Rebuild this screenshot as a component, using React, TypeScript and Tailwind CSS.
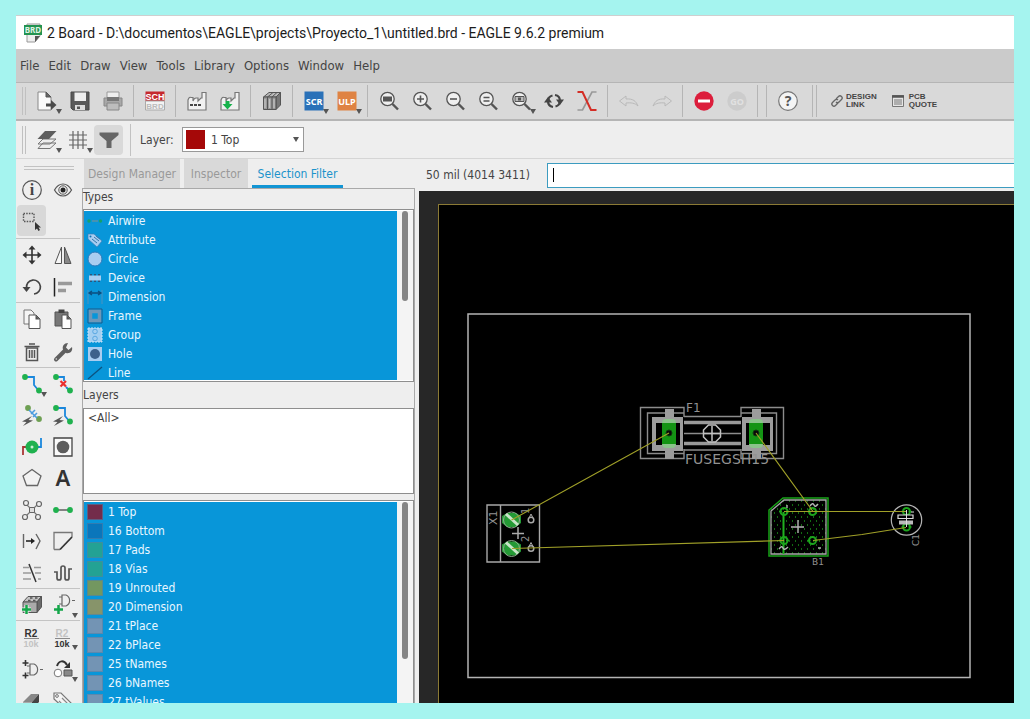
import React from "react";

type IconDef = { label: string; art: React.ReactNode; menu?: boolean; active?: boolean };

const G = "#555";
const K = "#333";
const GREEN = "#1fb14e";
const BLUE = "#1a87dc";
const BOLD = "font-['Noto_Sans',sans-serif] font-bold";
const ARIAL_BOLD = "font-['Liberation_Sans',sans-serif] font-bold";

function Icon({ children }: { children: React.ReactNode }) {
  return (
    <svg width="30" height="30" viewBox="-15 -15 30 30" fill="none" className="shrink-0 overflow-visible" aria-hidden="true">
      {children}
    </svg>
  );
}

const Caret = () => <path d="M9 8h6l-3 5z" fill={G} />;

const lens = (
  <>
    <path d="M3.500 3 9 8.500" stroke={G} strokeWidth="2.400" />
    <circle cx="-1.500" cy="-2" r="6.700" fill="#efefef" stroke={G} strokeWidth="1.300" />
  </>
);

const factory = <path d="M-9 9V-1c1-3 2-3 3-2.500l2 0V0c1-3 2-3 3-3l2 0v3l3-3h1V-8.500h4V9z" fill="#f1f1f1" stroke="#777" strokeWidth="1.200" />;

const books = (
  <>
    <path d="M-8.500-4-3-8.500H8.500L4-4z" fill="#bbb" stroke={G} />
    <path d="M4-4 8.500-8.500V4L4 8.500z" fill="#777" stroke={G} />
    <path d="M-8.500-4H4V8.500H-8.500z" fill="#999" stroke={G} />
    <path d="M-4.500-4V8.500M0-4V8.500M-4.500-4 1-8.500M0-4 5-8.500" stroke="#555" />
    <path d="M-7-2V7M-2.300-2V7M2-2V7" stroke="#ccc" />
  </>
);

const brick = (
  <>
    <path d="M-9-3-4-8.500H9.500L5-3z" fill="#c4c4c4" stroke={G} />
    <path d="M5-3 9.500-8.500V2L5 7.500z" fill="#6a6a6a" stroke={G} />
    <path d="M-9-3H5V7.500H-9z" fill="#aaa" stroke={G} />
    <path d="M-4-4.500h2.500M1-4.500h2.500M-2-7h2.500M3-7h2.500" stroke="#555" strokeWidth="1.600" />
  </>
);

const toolbar: IconDef[][] = [
  [
    { label: "Open", menu: true, art: <><path d="M-9-9h8l5 5V9H-9z" fill="#fafafa" stroke="#888" /><path d="M-1-9v5h5z" fill="#666" stroke={G} /><path d="M-1 2.500H4V-1l5.500 5L4 9V5.500H-1z" fill="#4a4a4a" /></> },
    { label: "Save", art: <><path d="M-9-9H9V9H-7L-9 7z" fill="#5a5a5a" stroke="#484848" /><path d="M-5.500-8.500H6V0H-5.500z" fill="#eee" /><path d="M-5 4H5V9H-5z" fill="#ddd" /><path d="M-3 5.500H0V8H-3z" fill={G} /></> },
    { label: "Print", art: <><path d="M-6-9H6V-2H-6z" fill="#eee" stroke="#999" /><path d="M-9-3H9V5H-9z" fill="#a8a8a8" stroke="#888" /><path d="M-6-4H6V0H-6z" fill="#777" /><path d="M-6 2H6V9H-6z" fill="#bdbdbd" stroke="#888" /></> },
  ],
  [
    { label: "Schematic", art: <><path d="M-9.500-9.500h19V0h-19z" fill="#c5282d" /><path d="M-9.500 0h19v9h-19z" fill="#f3f3f3" stroke="#aaa" /><text x="0" y="-1.500" fontSize="9" textAnchor="middle" fill="#fff" className={ARIAL_BOLD}>SCH</text><text x="0" y="8" fontSize="8" textAnchor="middle" fill="#bbb" className={ARIAL_BOLD}>BRD</text></> },
  ],
  [
    { label: "CAM processor", art: <>{factory}<path d="M-7 4h11" stroke="#444" strokeWidth="1.800" strokeDasharray="3 1" /></> },
    { label: "Manufacturing", art: <>{factory}<path d="M-4.500 0h4v3h3l-5 5.500-5-5.500h3z" fill="#16b24b" /></> },
  ],
  [{ label: "Library", art: books }],
  [
    { label: "Run script", menu: true, art: <><path d="M-9.500-9.500H9.500V9.500H-9.500z" fill="#2a71b8" /><text y="3.500" fontSize="9" textAnchor="middle" fill="#fff" className={BOLD}>SCR</text></> },
    { label: "Run ULP", menu: true, art: <><path d="M-9.500-9.500H9.500V9.500H-9.500z" fill="#df8343" /><text y="3.500" fontSize="9" textAnchor="middle" fill="#fff" className={BOLD}>ULP</text></> },
  ],
  [
    { label: "Zoom to fit", art: <>{lens}<path d="M-6-4.500H3V.500H-6z" fill={G} /></> },
    { label: "Zoom in", art: <>{lens}<path d="M-5-2H2M-1.500-5.500v7" stroke={G} strokeWidth="1.600" /></> },
    { label: "Zoom out", art: <>{lens}<path d="M-5-2H2" stroke={G} strokeWidth="1.600" /></> },
    { label: "Redraw", art: <>{lens}<path d="M-4.500-3.500h6M-4.500 0h6" stroke={G} strokeWidth="1.400" /></> },
    { label: "Zoom select", menu: true, art: <>{lens}<path d="M-6-4.500H3V.500H-6z" fill="#bbb" stroke={G} /><path d="M-3-3.500h3v3h-3z" fill={G} /></> },
    { label: "Refresh", art: <><path d="M-1.500-5.500A6 6 0 0 0-6 0c0 3 2 5.500 5 6" stroke="#444" strokeWidth="2.200" /><path d="M1.500 5.500A6 6 0 0 0 6 0c0-3-2-5.500-5-6" stroke="#444" strokeWidth="2.200" /><path d="M-10 1.500-6-4l4 5.500zM10-1.500 6 4 2-1.500z" fill="#444" /></> },
    { label: "Routing", art: <><path d="M-9.500 9h5L5-9h4.500" stroke="#999" strokeWidth="1.700" /><path d="M-9.500-9h5L4 9h5.500" stroke="#d42d25" strokeWidth="2" /></> },
  ],
  [
    { label: "Undo", art: <path d="M-9.500 0-3-5v3c7-.500 10 2 12 7-3-3-7-3.500-12-3v3z" stroke="#b9b9b9" /> },
    { label: "Redo", art: <path d="M9.500 0 3-5v3c-7-.500-10 2-12 7 3-3 7-3.500 12-3v3z" stroke="#b9b9b9" /> },
  ],
  [
    { label: "Stop", art: <><circle r="9.700" fill="#dc1e3c" /><path d="M-6 0H6" stroke="#fff" strokeWidth="3" /></> },
    { label: "Go", art: <><circle r="9.700" fill="#ccc" /><text y="3.500" fontSize="9" textAnchor="middle" fill="#e1e1e1" className={BOLD}>GO</text></> },
  ],
];

const helpArt = <><circle r="9.300" fill="#f4f4f4" stroke="#777" strokeWidth="1.200" /><text y="5" fontSize="14" textAnchor="middle" fill="#555" className={BOLD}>?</text></>;

const dot = (x: number, y: number, c = GREEN) => <circle cx={x} cy={y} r="2.900" fill={c} />;
const bolt = <path d="M0 1-10 6.500l4.500.5L-9 11 1 5.500-3.500 5z" fill="#555" />;
const gate = <path d="M-3-6H1a6 6 0 0 1 0 11H-3zM7-.500h3M-6-4h3M-6 3h3" stroke="#666" strokeWidth="1.200" />;

const palette: IconDef[][] = [
  [
    { label: "Info", art: <><circle r="9.300" stroke={G} strokeWidth="1.200" /><text y="5" fontSize="16" textAnchor="middle" fill="#444" className="font-['Liberation_Serif',serif] font-bold">i</text></> },
    { label: "Show", art: <><path d="M-8.500 0C-4-8 4-8 8.500 0 4 8-4 8-8.500 0z" stroke={G} strokeWidth="1.200" /><circle r="4.200" stroke={G} /><circle r="2.500" fill="#222" /></> },
    { label: "Group", active: true, art: <><path d="M-8.500-7.500H2V.500H-8.500z" stroke={G} strokeWidth="1.400" strokeDasharray="1.500 1.200" /><path d="M3 1v8l2-1.500L6.500 10l1.500-1-1.500-2.500H9z" fill={K} /></> },
  ],
  [
    { label: "Move", art: <><path d="M-7 0H7M0-7V7" stroke={K} strokeWidth="1.600" /><path d="M-9.500 0l4-3.500v7zM9.500 0l-4-3.500v7zM0-9.500l3.500 4h-7zM0 9.500l3.500-4h-7z" fill={K} /></> },
    { label: "Mirror", art: <><path d="M-1.500-8V8.500H-8z" fill="#f6f6f6" stroke={G} /><path d="M1.500-8V8.500H8z" fill="#888" stroke={G} /></> },
    { label: "Rotate", art: <><path d="M-5.500 1A7 7 0 1 1 2 7" stroke="#444" strokeWidth="1.700" /><path d="M-9.500 0h8L-5.500 5z" fill="#444" /></> },
    { label: "Align", art: <><path d="M-8.500-9V9.500" stroke="#222" strokeWidth="1.500" /><path d="M-5-3.500H9M-5 3.500H3" stroke="#999" strokeWidth="3.500" /></> },
  ],
  [
    { label: "Copy", art: <><path d="M-8-9h7l3 3V5H-8z" fill="#f5f5f5" stroke="#777" /><path d="M-3-4H4l4 4V9.500H-3z" fill="#fff" stroke={G} /><path d="M3.500-4v4.500H8z" fill={G} /></> },
    { label: "Paste", art: <><path d="M-8-7H5V7H-8z" fill="#777" stroke="#555" /><path d="M-4.500-9.500h6V-6h-6z" fill="#444" /><path d="M-1-4H4l4 4V9.500H-1z" fill="#fff" stroke={G} /><path d="M3.500-4v4.500H8z" fill={G} /></> },
    { label: "Delete", art: <><path d="M-5.500-4V8.500h11V-4z" fill="#eee" stroke={G} strokeWidth="1.500" /><path d="M-7.500-5.500h15M-3-8h6M-2.500-2V6M0-2V6M2.500-2V6" stroke={G} strokeWidth="1.500" /></> },
    { label: "Change", art: <><path d="M-7 7.500 2-1.500" stroke="#5f5f5f" strokeWidth="4" strokeLinecap="round" /><path d="M5-9C1-9-1-6 0-2.500L3 1c4 1 7-2 6-6L5.500-2 3-4.500z" fill="#5f5f5f" /><circle cx="-6.700" cy="7" r=".8" fill="#ddd" /></> },
  ],
  [
    { label: "Route", menu: true, art: <><path d="M-7-7H2V1L7 7" stroke={BLUE} strokeWidth="1.800" />{dot(-7, -7)}{dot(7, 6.5)}</> },
    { label: "Ripup", art: <><path d="M-7-7H1V-3M3 3 7 7" stroke={BLUE} strokeWidth="1.800" />{dot(-7, -7)}{dot(7, 6.5)}<path d="M-2.500-3 3 2.500M3-3-2.500 2.500" stroke="#ea2f2f" strokeWidth="2.200" /></> },
    { label: "Autoroute", art: <>{dot(-4, -7, "#6ea053")}{dot(7, 4, "#6ea053")}<path d="m-3-5 8 8M-1-1 3-5M1 2 5-2" stroke="#4b9cdf" strokeWidth="1.600" />{bolt}</> },
    { label: "Quick route", art: <><path d="M-7-7H2V1L7 7" stroke={BLUE} strokeWidth="1.800" />{dot(-7, -7)}{dot(7, 6.5)}{bolt}</> },
    { label: "Via", art: <><path d="M-9 8V0h5" stroke="#a93636" strokeWidth="1.800" /><path d="M9-9V0H4" stroke={BLUE} strokeWidth="1.800" /><circle r="6.500" fill={GREEN} /><circle r="1.500" fill="#c9f1d4" /></> },
    { label: "Hole", art: <><path d="M-9-9H9V9H-9z" fill="#fafafa" stroke="#444" strokeWidth="1.300" /><circle r="6.300" fill="#5d5d5d" /></> },
    { label: "Polygon", art: <path d="M0-8.500 9-2 5.500 7.500h-11L-9-2z" fill="#f2f2f2" stroke="#666" strokeWidth="1.300" /> },
    { label: "Text", art: <text y="8" fontSize="22" textAnchor="middle" fill="#333" className="font-['Noto_Sans',sans-serif] font-semibold">A</text> },
    { label: "Ratsnest", art: <><path d="m-6-6 12 12M6-6-6 6" stroke="#777" strokeWidth="1.200" /><path d="M-2.500-2.500h5v5h-5z" fill="#ddd" stroke="#666" />{[[-6, -7], [7, -6], [-7, 7], [6, 7]].map(([x, y]) => <circle key={`${x}${y}`} cx={x} cy={y} r="2.500" fill="#eee" stroke="#666" strokeWidth="1.200" />)}</> },
    { label: "Signal", art: <><path d="M-7 0H7" stroke="#777" strokeWidth="1.800" />{dot(-7, 0)}{dot(7, 0)}</> },
    { label: "Split", art: <><path d="M-8.500-7V7M4-7 8 0 4 8" stroke="#666" strokeWidth="1.400" /><path d="M-6 0H0" stroke="#222" strokeWidth="1.600" /><path d="M-1-3 3 0-1 3z" fill="#222" /></> },
    { label: "Miter", art: <><path d="M-9 8.500V-8.500H9V-4M-9 8.500h6" stroke="#777" strokeWidth="1.300" /><path d="M-3 8.500 9-4" stroke="#333" strokeWidth="1.800" /></> },
    { label: "Slice", art: <><path d="M-9-5.500h6M2-5.500h7M-9 0h8M3 0h6M-9 6h8M6 6h3" stroke="#999" strokeWidth="1.400" /><path d="M-3-9 4 9" stroke="#333" strokeWidth="1.500" /></> },
    { label: "Meander", art: <path d="M-9-1h3V5a1.800 1.800 0 0 0 4 0V-5a1.800 1.800 0 0 1 4 0V5a1.800 1.800 0 0 0 4 0V-4h3" stroke={G} strokeWidth="1.700" /> },
  ],
  [
    { label: "Add part", art: <>{brick}<path d="M-10 4.500h9M-5.500 0v9" stroke="#eee" strokeWidth="4" /><path d="M-10 4.500h9M-5.500 0v9" stroke="#14a64a" strokeWidth="2.500" /></> },
    { label: "Add gate", menu: true, art: <><g transform="translate(2 -4)">{gate}</g><path d="M-9 4.500h9M-4.500 0v9" stroke="#14a64a" strokeWidth="2.500" /></> },
  ],
  [
    { label: "Name", art: <><text x="-1" y="0" fontSize="10" textAnchor="middle" fill="#333" className={ARIAL_BOLD}>R2</text><path d="M-8 1.500H7" stroke="#888" /><text x="-1" y="10" fontSize="9" textAnchor="middle" fill="#c3c3c3" className={ARIAL_BOLD}>10k</text></> },
    { label: "Value", menu: true, art: <><text x="-1" y="0" fontSize="10" textAnchor="middle" fill="#c3c3c3" className={ARIAL_BOLD}>R2</text><path d="M-8 1.500H7" stroke="#888" /><text x="-1" y="10" fontSize="9" textAnchor="middle" fill="#333" className={ARIAL_BOLD}>10k</text></> },
    { label: "Gate swap", art: <><g transform="translate(1 1)">{gate}</g><path d="M-9.500-6h6M-6.500-9v6M-9.500 6.500h6M-6.500 3.500v6" stroke={K} strokeWidth="1.600" /></> },
    { label: "Replace", menu: true, art: <><path d="M-6-3C-4-9 1-9 4-4" stroke={K} strokeWidth="2" /><path d="M7-7v6H1z" fill={K} /><circle cx="-5" cy="4" r="3.800" fill="#fff" stroke="#777" /><path d="M1 1h8v6H1z" fill="#888" stroke={G} /></> },
    { label: "Lock", art: <><path d="M-9 1-1-7h8L0 1z" fill="#888" /><path d="M0 1 7-7v8L0 8z" fill="#444" /><path d="M-9 1h9v8h-9z" fill="#aaa" /></> },
    { label: "Attribute", art: <><path d="M-9-8h7L9 3 3 9-9-2z" fill="#f4f4f4" stroke="#777" strokeWidth="1.200" /><circle cx="-6" cy="-5" r="1.400" stroke="#777" /><path d="m-1-3 6 6M-4 0l6 6" stroke="#888" strokeWidth="1.200" /></> },
  ],
];

const groupHeights = ["h-16", "h-16", "h-[65px]", "h-[221px]", "h-8", "h-24"];

const typeItems: { name: string; art: React.ReactNode }[] = [
  { name: "Airwire", art: <><path d="M5 8h6" stroke="#5d91a3" strokeWidth="1.500" /><circle cx="2" cy="8" r="1.700" fill="#16a06b" /><circle cx="13.500" cy="8" r="1.700" fill="#16a06b" /></> },
  { name: "Attribute", art: <><path d="M1 2h6l8 7-5 6L1 7z" fill="#a9cdf0" stroke="#3880b9" strokeWidth=".7" /><circle cx="3.500" cy="4.500" r="1" fill="#0a70b4" /><path d="m7 5 5 4M5 7l5 4M9 4l4 3" stroke="#3576ab" /></> },
  { name: "Circle", art: <circle cx="8" cy="8" r="7" fill="#a9cdf0" stroke="#2b79ba" /> },
  { name: "Device", art: <><path d="M4 4v8M8 4v8M12 4v8" stroke="#2a567c" strokeWidth="2" /><path d="M2 5.500h12v5H2z" fill="#a9cdf0" /></> },
  { name: "Dimension", art: <><path d="M1 1v14M15 1v14" stroke="#4f91bd" /><path d="M2 4h12M5 2 2 4l3 2M11 2l3 2-3 2" stroke="#0b4e7f" strokeWidth="1.300" /></> },
  { name: "Frame", art: <><path d="M1 1h14v14H1z" stroke="#1d5887" /><path d="M3.500 3.500h9v9h-9z" stroke="#6e97b8" strokeWidth="3.500" /></> },
  { name: "Group", art: <><path d="M1 1h14v14H1z" fill="#a3cff2" stroke="#cbe4f7" strokeDasharray="2 1" /><circle cx="8" cy="4.500" r="2.300" stroke="#5ba8e2" /><circle cx="8" cy="11.500" r="2.300" stroke="#5ba8e2" /></> },
  { name: "Hole", art: <><path d="M1 1h14v14H1z" fill="#a9cdf0" /><circle cx="8" cy="8" r="5" fill="#3d618b" /></> },
  { name: "Line", art: <path d="M1 14 15 2" stroke="#0c527f" strokeWidth="1.300" /> },
];

const layerItems: [string, string][] = [
  ["1 Top", "bg-[#732c4b]"],
  ["16 Bottom", "bg-[#0a76bb]"],
  ["17 Pads", "bg-[#23a294]"],
  ["18 Vias", "bg-[#23a294]"],
  ["19 Unrouted", "bg-[#739760]"],
  ["20 Dimension", "bg-[#87946a]"],
  ["21 tPlace", "bg-[#7394b4]"],
  ["22 bPlace", "bg-[#7394b4]"],
  ["25 tNames", "bg-[#7394b4]"],
  ["26 bNames", "bg-[#7394b4]"],
  ["27 tValues", "bg-[#7394b4]"],
];

const Sep = () => <span className="mx-1 h-8 w-px shrink-0 bg-[#b5b5b5]" />;
const Grip = () => <span className="ml-1.5 h-7 w-1 shrink-0 border-x border-[#c0c0c0]" />;

function ToolButton({ item, className }: { item: IconDef; className: string }) {
  return (
    <button type="button" aria-label={item.label} className={`flex shrink-0 items-center justify-center ${className}`}>
      <Icon>
        {item.art}
        {item.menu && <Caret />}
      </Icon>
    </button>
  );
}

function ToolPalette() {
  return (
    <aside aria-label="Drawing tools" className="flex w-[66px] shrink-0 flex-col overflow-hidden">
      <div className="mx-2 mt-[7px] h-1 shrink-0 border-y border-[#c2c2c2]" />
      <div className="mt-1 flex flex-col">
        {palette.map((group, i) => (
          <div
            key={i}
            className={`mr-0.5 grid shrink-0 grid-cols-[31px_31px] ${i ? "content-between border-t border-[#c4c4c4]" : "content-start"} ${groupHeights[i]}`}
          >
            {group.map((item) => (
              <ToolButton key={item.label} item={item} className={`h-[31px] ${item.active ? "mx-px rounded-sm bg-[#d8d8d8]" : ""}`} />
            ))}
          </div>
        ))}
      </div>
    </aside>
  );
}

function Scrollbar({ size }: { size: string }) {
  return (
    <div className="flex w-4 shrink-0 justify-center bg-[#f4f4f4]">
      <span className={`w-[6px] rounded-full bg-[#858585] ${size}`} />
    </div>
  );
}

function SelectionPanel() {
  return (
    <section className="flex w-[333px] shrink-0 flex-col">
      <div role="tablist" className="flex h-[29px] shrink-0 gap-1 pl-0.5 text-[#999]">
        <button role="tab" type="button" className="w-24 bg-[#d9d9d9]">Design Manager</button>
        <button role="tab" type="button" className="w-16 bg-[#d9d9d9]">Inspector</button>
        <button role="tab" type="button" aria-selected="true" className="w-[91px] border-b-[3px] border-[#1295d4] pt-[3px] text-[#1c93cb]">Selection Filter</button>
      </div>
      <div className="flex min-h-0 flex-1 flex-col border border-b-0 border-[#a9a9a9]">
        <h2 className="h-5 shrink-0 leading-4">Types</h2>
        <div className="flex h-[173px] shrink-0 overflow-hidden border border-[#8e8e8e] bg-white py-px">
          <ul className="flex-1 bg-[#0896d9] text-[#e8f6ff]">
            {typeItems.map((t) => (
              <li key={t.name} className="flex h-[19px] items-center gap-[5px] pl-[3px]">
                <svg width="16" height="16" viewBox="0 0 16 16" fill="none" aria-hidden="true">{t.art}</svg>
                {t.name}
              </li>
            ))}
          </ul>
          <Scrollbar size="h-[90px]" />
        </div>
        <h2 className="h-[26px] shrink-0 leading-[26px]">Layers</h2>
        <div className="h-[86px] shrink-0 border border-[#8e8e8e] bg-white px-1 leading-[18px]">&lt;All&gt;</div>
        <div className="mt-1.5 flex min-h-0 flex-1 overflow-hidden border border-b-0 border-[#8e8e8e] bg-white pt-px">
          <ul className="flex-1 bg-[#0896d9] text-[#e8f6ff]">
            {layerItems.map(([name, color]) => (
              <li key={name} className="flex h-[19px] items-center gap-[5px] pl-[3px]">
                <span className={`size-4 border border-[#4c80a8]/60 ${color}`} />
                {name}
              </li>
            ))}
          </ul>
          <Scrollbar size="h-[157px]" />
        </div>
      </div>
    </section>
  );
}

const pad = (x: number, y: number) => (
  <g key={`${x}-${y}`}>
    <circle cx={x} cy={y} r="3.500" stroke="#1ca51c" strokeWidth="2" />
    <path d={`M${x - 5} ${y}h3M${x + 2} ${y}h3`} stroke="#1ca51c" strokeWidth="1.500" />
  </g>
);

function BoardDrawing() {
  const label = "font-['DejaVu_Sans',sans-serif]";
  return (
    <svg className="block h-full w-full" fill="none" role="img" aria-label="Board layout">
      <defs>
        <pattern id="dots" x="0" y="0" width="6" height="8" patternUnits="userSpaceOnUse">
          <rect width="1" height="2" fill="#126b12" />
          <rect x="3" y="4" width="1" height="2" fill="#126b12" />
        </pattern>
      </defs>
      <g transform="translate(-439 -205)">
        <path d="M468 314H970V677.500H468z" stroke="#b4b4b4" strokeWidth="1.500" />

        <g stroke="#8c8c8c" strokeWidth="1.400">
          <path d="M684 417v-9.500H640.500v51H684V449M741 417v-9.500h42.500v51H741V449" />
          <path d="M684 413H647.500V453.500H684M741 413H776.500V453.500H741" />
          <path d="M684 416.500h57M684 450h57M684 433.500h57" />
        </g>
        <path d="M684 422.500h57M684 443.500h57" stroke="#999" strokeWidth="3.500" />
        <g fill="#9c9c9c">
          {[652, 742].map((x) => (
            <path key={x} fillRule="evenodd" d={`M${x} 417h31v34h-31zM${x + 4} 423v22h24v-22z`} />
          ))}
          <path d="M665 409h9v9h-9zM665 450h9v9h-9zM752 409h9v9h-9zM752 450h9v9h-9z" />
        </g>
        {[669, 756].map((x) => (
          <g key={x}>
            <rect x={x - 7} y="419" width="14" height="29" rx="4" fill="#8ac38a" />
            <rect x={x - 7} y="423" width="14" height="21" fill="#149414" />
            <circle cx={x} cy="433" r="3" fill="#0a0a0a" stroke="#103d10" />
          </g>
        ))}
        <path d="m708.500 425 7 0 5 5v7l-5 5h-7l-5-5v-7zM712 426v15M704 433.500h16" stroke="#c0c0c0" strokeWidth="1.500" />
        <text x="686" y="412" fontSize="12" fill="#929292" className={label}>F1</text>
        <text x="685" y="464" fontSize="14" fill="#929292" className={label}>FUSEGSH15</text>

        <path d="M487 505h52.500v57H487zM500.500 505v57" stroke="#a8a8a8" strokeWidth="1.400" />
        <g transform="translate(497 525) rotate(-90)">
          <text fontSize="11" fill="#929292" className={label}>X1</text>
        </g>
        {[520, 548.5].map((y) => (
          <g key={y}>
            <path d={`M502 ${y - 4}l5-3h9l5 3v7l-5 4h-9l-5-4z`} fill="#249a35" />
            <circle cx="511.500" cy={y} r="8" stroke="#8fab8f" />
            <path d={`M506 ${y - 6}l12 11`} stroke="#c7e4c7" strokeWidth="3" />
            <circle cx="531" cy={y} r="2.800" stroke="#a8a8a8" strokeWidth="1.500" />
            <path d={`M529 ${y - 2}l2-4 2 4`} stroke="#a8a8a8" />
          </g>
        ))}
        <path d="M518 527v12M512 533.500h12" stroke="#aaa" strokeWidth="1.500" />
        <g transform="translate(529 542) rotate(-90)">
          <text fontSize="10" fill="#929292" className={label}>2</text>
        </g>
        <g transform="translate(529 514) rotate(-90)">
          <text fontSize="10" fill="#929292" className={label}>1</text>
        </g>

        <path d="M783 498h45v58h-59v-46z" stroke="#18a118" strokeWidth="1.500" fill="url(#dots)" />
        <path d="M784 500h42v54h-55v-43z" stroke="#aaa" strokeWidth="1.300" />
        <path d="M783.500 512v42" stroke="#20b020" strokeWidth="2" />
        {pad(784, 511.5)}{pad(812.5, 511.5)}{pad(784, 540.5)}{pad(812.5, 540.5)}
        <path d="M798 520v13M791 527h13M787 505v3M810 506q3-4 4-1t4-1M779 549q3-4 4-1t5-1M818 548h3" stroke="#b4b4b4" strokeWidth="1.400" />
        <text x="812" y="565" fontSize="9" fill="#929292" className={label}>B1</text>

        <circle cx="906.500" cy="520" r="15.200" stroke="#b4b4b4" strokeWidth="1.200" />
        {pad(906.5, 511.5)}{pad(906.5, 527)}
        <path d="M898 515h15v3.500h-15z" fill="#000" stroke="#ddd" strokeWidth="1.200" />
        <path d="M899 520.500h14v4h-14z" fill="#bbb" />
        <path d="M906.500 510v17M911 512h3" stroke="#ddd" />
        <g transform="translate(919 546) rotate(-90)">
          <text fontSize="9" fill="#929292" className={label}>C1</text>
        </g>

        <path d="M511.500 520 669 433M756 433l57 78.500M784 511.500h122M512 548.500l272-8M813 540.500l49-6 44-7" stroke="#a0a028" strokeWidth="1.100" />
      </g>
    </svg>
  );
}

export default function App() {
  return (
    <div className="h-screen min-h-[480px] bg-[#a5f4ef] px-4 pt-[15px] pb-4 font-['DejaVu_Sans_Condensed','Noto_Sans',sans-serif] text-[12px] leading-4 text-[#444]">
      <div className="flex h-full flex-col overflow-hidden border-t border-[#cfcfcf] bg-[#eee]">
        <header className="flex h-[33px] shrink-0 items-center gap-[5px] bg-white pl-2">
          <svg width="18" height="20" viewBox="0 0 18 20" fill="none" aria-hidden="true">
            <path d="M3 1h13v12l-5 6H3z" fill="#eee" stroke="#999" />
            <path d="M16 13h-5v6z" fill="#555" />
            <path d="M0 2h18v10H0z" fill="#239350" />
            <text x="9" y="10" fontSize="8" textAnchor="middle" fill="#e0f3e6" className={BOLD}>BRD</text>
          </svg>
          <h1 className="font-['Roboto',sans-serif] text-[14px] text-[#1c1c1c]">2 Board - D:\documentos\EAGLE\projects\Proyecto_1\untitled.brd - EAGLE 9.6.2 premium</h1>
        </header>

        <nav className="flex h-[34px] shrink-0 items-center gap-[9px] border-b border-[#b5b5b5] bg-[#cbcbcb] pl-1 text-[13px]">
          {["File", "Edit", "Draw", "View", "Tools", "Library", "Options", "Window", "Help"].map((m) => (
            <button key={m} type="button">{m}</button>
          ))}
        </nav>

        <div role="toolbar" className="flex h-[38px] shrink-0 items-center border-b-2 border-[#b5b5b5] bg-[#d9d9d9]">
          <Grip />
          <div className="ml-1 flex items-center">
            {toolbar.map((group, i) => (
              <React.Fragment key={i}>
                {group.map((item) => <ToolButton key={item.label} item={item} className="w-[33px]" />)}
                <Sep />
              </React.Fragment>
            ))}
          </div>
          <Sep />
          <ToolButton item={{ label: "Help contents", art: helpArt }} className="w-[33px]" />
          <span className="ml-2 h-8 w-[5px] shrink-0 border-x border-[#b5b5b5]" />
          <button type="button" className={`ml-3.5 flex items-center gap-[3px] text-left text-[8px] leading-[8px] text-[#444] ${ARIAL_BOLD}`}>
            <svg width="12" height="12" viewBox="0 0 12 12" fill="none" stroke="#666" strokeWidth="1.300" aria-hidden="true">
              <path d="m5 4 2.500-2.500a2 2 0 0 1 3 3L8 7a2 2 0 0 1-3 0M7 8l-2.500 2.500a2 2 0 0 1-3-3L4 5a2 2 0 0 1 3 0" />
            </svg>
            <span>DESIGN<br />LINK</span>
          </button>
          <button type="button" className={`ml-[15px] flex items-center gap-[5px] text-left text-[8px] leading-[8px] text-[#444] ${ARIAL_BOLD}`}>
            <svg width="12" height="12" viewBox="0 0 12 12" fill="none" aria-hidden="true">
              <path d="M.500.500h11v11H.500z" fill="#e5e5e5" stroke="#777" />
              <path d="M0 1.500h12" stroke="#555" strokeWidth="2.500" />
              <path d="M2 5h8M2 7h8M2 9h8" stroke="#777" />
            </svg>
            <span>PCB<br />QUOTE</span>
          </button>
        </div>

        <div role="toolbar" className="flex h-[38px] shrink-0 items-center border-b border-[#d5d5d5]">
          <Grip />
          <div className="ml-[5px] flex items-center">
            <ToolButton className="w-[31px]" item={{ label: "Layer settings", menu: true, art: <><path d="M-9 8.500-4 3H9L3 8.500zM-9 4-4-1H9L3 4z" fill="#eee" stroke="#777" /><path d="M-9.500-1-2-9H9.500L2-1z" fill="#5e5e5e" /></> }} />
            <ToolButton className="w-8" item={{ label: "Grid", menu: true, art: <path d="M-9-5H9M-9 0H9M-9 5H9M-5-9V9M0-9V9M5-9V9" stroke="#666" strokeWidth="1.200" /> }} />
            <ToolButton className="w-[29px] rounded-sm bg-[#d9d9d9]" item={{ label: "Filter", art: <path d="M-9.500-7.500h19v2.500L2.500 1v7h-5V1l-7-6z" fill="#666" /> }} />
          </div>
          <span className="mx-[7px] h-8 w-px bg-[#c2c2c2]" />
          <label htmlFor="layer" className="w-[44px] pl-0.5">Layer:</label>
          <div className="relative flex items-center">
            <select id="layer" className="h-[25px] w-[122px] appearance-none border border-[#999] bg-white pl-7">
              <option>1 Top</option>
            </select>
            <span className="pointer-events-none absolute left-1 size-[19px] bg-[#a50808]" />
            <svg className="pointer-events-none absolute right-[5px]" width="6" height="5" aria-hidden="true"><path d="M0 0h6L3 5z" fill="#555" /></svg>
          </div>
        </div>

        <main className="flex min-h-0 flex-1">
          <ToolPalette />
          <SelectionPanel />
          <section className="ml-1 flex min-w-0 flex-1 flex-col">
            <div className="flex h-8 shrink-0 items-center pl-[7px]">
              <label htmlFor="command" className="w-[121px] shrink-0">50 mil (4014 3411)</label>
              <div className="relative flex min-w-0 flex-1 items-center">
                <input id="command" type="text" className="h-[25px] w-full border border-r-0 border-[#3c9cc0] bg-white px-1.5" />
                <span className="pointer-events-none absolute left-[6px] h-3.5 w-px bg-black" />
              </div>
            </div>
            <div className="min-h-0 flex-1 bg-[#272727] pt-[13px] pl-[19px]">
              <div className="h-full border-t border-l border-[#8b7a35] bg-black">
                <BoardDrawing />
              </div>
            </div>
          </section>
        </main>
      </div>
    </div>
  );
}
